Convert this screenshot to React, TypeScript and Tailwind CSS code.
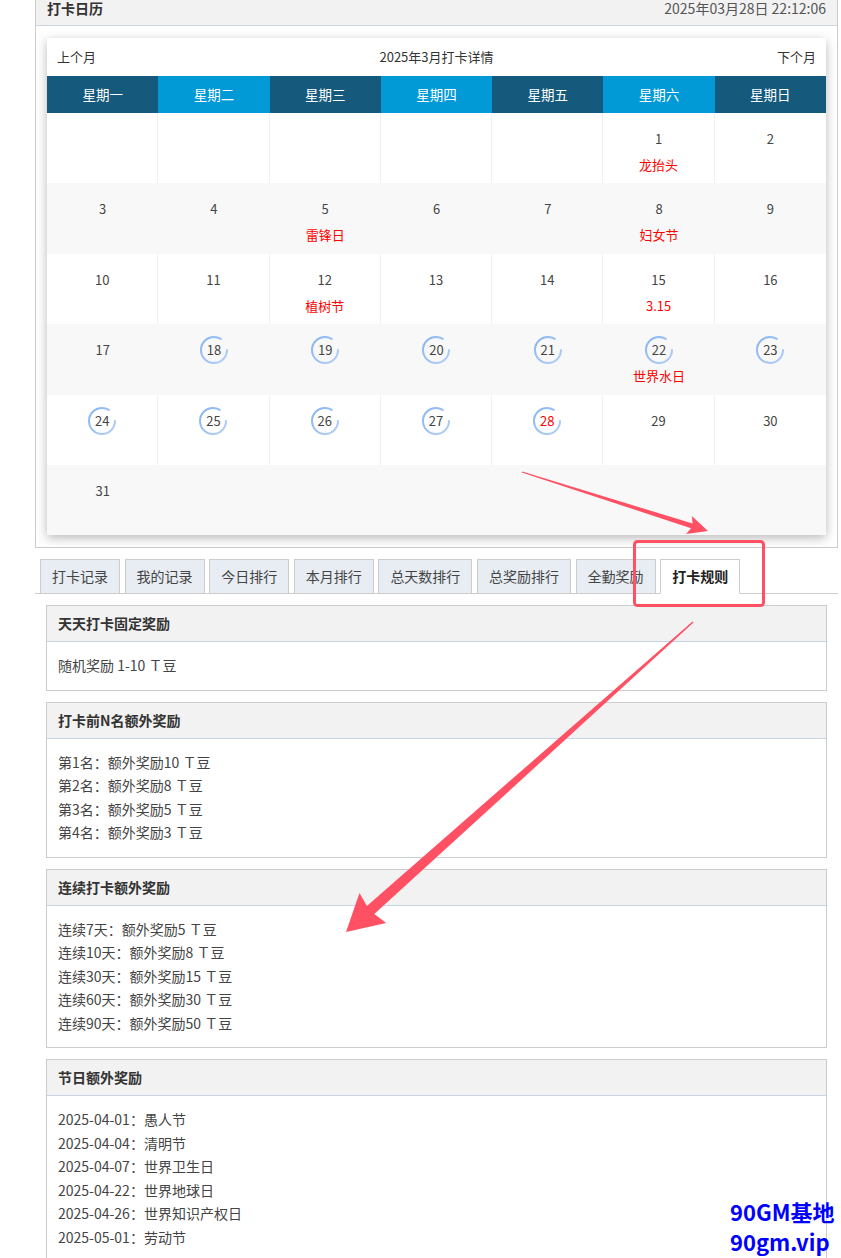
import React from "react";

const FONT = '"Noto Sans CJK SC", "Noto Sans", sans-serif';

type Day = { n: number; fest?: string; ring?: boolean; red?: boolean } | null;

const weeks: Day[][] = [
  [null, null, null, null, null, { n: 1, fest: "龙抬头" }, { n: 2 }],
  [{ n: 3 }, { n: 4 }, { n: 5, fest: "雷锋日" }, { n: 6 }, { n: 7 }, { n: 8, fest: "妇女节" }, { n: 9 }],
  [{ n: 10 }, { n: 11 }, { n: 12, fest: "植树节" }, { n: 13 }, { n: 14 }, { n: 15, fest: "3.15" }, { n: 16 }],
  [
    { n: 17 },
    { n: 18, ring: true },
    { n: 19, ring: true },
    { n: 20, ring: true },
    { n: 21, ring: true },
    { n: 22, ring: true, fest: "世界水日" },
    { n: 23, ring: true },
  ],
  [
    { n: 24, ring: true },
    { n: 25, ring: true },
    { n: 26, ring: true },
    { n: 27, ring: true },
    { n: 28, ring: true, red: true },
    { n: 29 },
    { n: 30 },
  ],
  [{ n: 31 }, null, null, null, null, null, null],
];

const weekNames = ["星期一", "星期二", "星期三", "星期四", "星期五", "星期六", "星期日"];

const tabs = ["打卡记录", "我的记录", "今日排行", "本月排行", "总天数排行", "总奖励排行", "全勤奖励", "打卡规则"];

const panels: { title: string; lines: string[] }[] = [
  { title: "天天打卡固定奖励", lines: ["随机奖励 1-10 Ｔ豆"] },
  {
    title: "打卡前N名额外奖励",
    lines: ["第1名：额外奖励10 Ｔ豆", "第2名：额外奖励8 Ｔ豆", "第3名：额外奖励5 Ｔ豆", "第4名：额外奖励3 Ｔ豆"],
  },
  {
    title: "连续打卡额外奖励",
    lines: [
      "连续7天：额外奖励5 Ｔ豆",
      "连续10天：额外奖励8 Ｔ豆",
      "连续30天：额外奖励15 Ｔ豆",
      "连续60天：额外奖励30 Ｔ豆",
      "连续90天：额外奖励50 Ｔ豆",
    ],
  },
  {
    title: "节日额外奖励",
    lines: [
      "2025-04-01：愚人节",
      "2025-04-04：清明节",
      "2025-04-07：世界卫生日",
      "2025-04-22：世界地球日",
      "2025-04-26：世界知识产权日",
      "2025-05-01：劳动节",
    ],
  },
];

function arrowPoints(
  sx: number,
  sy: number,
  tx: number,
  ty: number,
  w0: number,
  w1: number,
  hl: number,
  hw: number
): string {
  const dx = tx - sx;
  const dy = ty - sy;
  const len = Math.sqrt(dx * dx + dy * dy);
  const ux = dx / len;
  const uy = dy / len;
  const nx = -uy;
  const ny = ux;
  const bx = tx - ux * hl;
  const by = ty - uy * hl;
  const pts: [number, number][] = [
    [sx + (nx * w0) / 2, sy + (ny * w0) / 2],
    [bx + (nx * w1) / 2, by + (ny * w1) / 2],
    [bx - ux * 3 + (nx * hw) / 2, by - uy * 3 + (ny * hw) / 2],
    [tx, ty],
    [bx - ux * 3 - (nx * hw) / 2, by - uy * 3 - (ny * hw) / 2],
    [bx - (nx * w1) / 2, by - (ny * w1) / 2],
    [sx - (nx * w0) / 2, sy - (ny * w0) / 2],
  ];
  return pts.map((p) => `${p[0].toFixed(1)},${p[1].toFixed(1)}`).join(" ");
}

function Ring() {
  return (
    <svg
      width="30"
      height="30"
      viewBox="0 0 30 30"
      className="absolute left-1/2 top-1/2 -translate-x-1/2 -translate-y-1/2"
    >
      <defs>
        <linearGradient id="rg" x1="0" y1="0" x2="1" y2="1">
          <stop offset="0%" stopColor="#86b4f3" />
          <stop offset="100%" stopColor="#b3cff7" />
        </linearGradient>
      </defs>
      <circle
        cx="15"
        cy="15"
        r="13"
        fill="none"
        stroke="url(#rg)"
        strokeWidth="2"
        strokeDasharray="68 14"
        strokeLinecap="round"
      />
    </svg>
  );
}

export default function App() {
  return (
    <div className="relative w-[841px] bg-white text-[#333]" style={{ fontFamily: FONT }}>
      {/* outer calendar panel */}
      <div className="ml-[35px] w-[803px] border-x border-b border-[#cccccc]">
        <div className="flex h-[26px] items-start justify-between border-b border-[#ccd4dc] bg-[#f2f2f2] px-[11px]">
          <span className="text-[14px] font-bold leading-[17px] text-[#333]">打卡日历</span>
          <span className="text-[14px] leading-[17px] text-[#555]">2025年03月28日 22:12:06</span>
        </div>
        <div className="px-[11px] pb-[12px] pt-[12px]">
          <div className="bg-white shadow-[0_3px_10px_rgba(0,0,0,0.28)]">
            <div className="flex h-[38px] items-center justify-between px-[10px] text-[13px] text-[#333]">
              <span>上个月</span>
              <span>2025年3月打卡详情</span>
              <span>下个月</span>
            </div>
            <div className="grid h-[37px] grid-cols-7">
              {weekNames.map((w, i) => (
                <div
                  key={w}
                  className={`flex items-center justify-center text-[13.5px] text-white ${
                    i % 2 === 0 ? "bg-[#155a7d]" : "bg-[#0199d6]"
                  }`}
                >
                  {w}
                </div>
              ))}
            </div>
            {weeks.map((wk, ri) => (
              <div
                key={ri}
                className={`grid h-[70.4px] grid-cols-7 ${ri % 2 === 1 ? "bg-[#f8f8f8]" : "bg-white"}`}
              >
                {wk.map((d, ci) => (
                  <div
                    key={ci}
                    className={`flex flex-col items-center pt-[16px] ${
                      ri % 2 === 0 && ci < 6 ? "border-r border-[#f1f1f1]" : ""
                    }`}
                  >
                    {d && (
                      <>
                        <div
                          className={`relative flex h-[20px] items-center justify-center text-[13px] leading-[20px] ${
                            d.red ? "text-[#ff0000]" : "text-[#444]"
                          }`}
                        >
                          {d.ring && <Ring />}
                          <span className="relative">{d.n}</span>
                        </div>
                        {d.fest && (
                          <div className="mt-[6px] text-[13px] leading-[20px] text-[#ff0000]">{d.fest}</div>
                        )}
                      </>
                    )}
                  </div>
                ))}
              </div>
            ))}
          </div>
        </div>
      </div>

      {/* tabs */}
      <div className="ml-[35px] mt-[11px] flex w-[803px] gap-[4.6px] border-b border-[#cccccc] pl-[5px]">
        {tabs.map((t, i) => {
          const active = i === tabs.length - 1;
          return (
            <div
              key={t}
              className={`-mb-px flex h-[35px] items-center border border-[#cccccc] px-[11px] text-[14px] ${
                active ? "border-b-white bg-white font-bold text-[#222]" : "bg-[#e7edf3] text-[#444]"
              }`}
            >
              {t}
            </div>
          );
        })}
      </div>

      {/* rule panels */}
      <div className="ml-[46px] mt-[11px] flex w-[781px] flex-col gap-[11px]">
        {panels.map((p) => (
          <div key={p.title} className="border border-[#cccccc] bg-white">
            <div className="flex h-[36px] items-center border-b border-[#c8d6e4] bg-[#f2f2f2] px-[11px] text-[14px] font-bold text-[#333]">
              {p.title}
            </div>
            <div className="px-[11px] py-[12px] text-[14px] leading-[23.5px] text-[#444]">
              {p.lines.map((l) => (
                <div key={l}>{l}</div>
              ))}
            </div>
          </div>
        ))}
      </div>

      {/* annotation overlay */}
      <svg className="pointer-events-none absolute left-0 top-0" width="841" height="1258" viewBox="0 0 841 1258">
        <polygon points={arrowPoints(522, 472, 708, 531, 1, 5, 17, 19)} fill="#ff5064" />
        <polygon points={arrowPoints(693, 622, 346, 932, 1.5, 11, 33, 40)} fill="#ff5064" />
        <rect x="634.5" y="541.5" width="129" height="64" rx="3" fill="none" stroke="#ff5064" strokeWidth="3" />
      </svg>

      <div className="pointer-events-none absolute left-[730px] top-[1196px] text-[22px] font-bold leading-[30px] text-[#0000ff]">
        <div>90GM基地</div>
        <div>90gm.vip</div>
      </div>
    </div>
  );
}
